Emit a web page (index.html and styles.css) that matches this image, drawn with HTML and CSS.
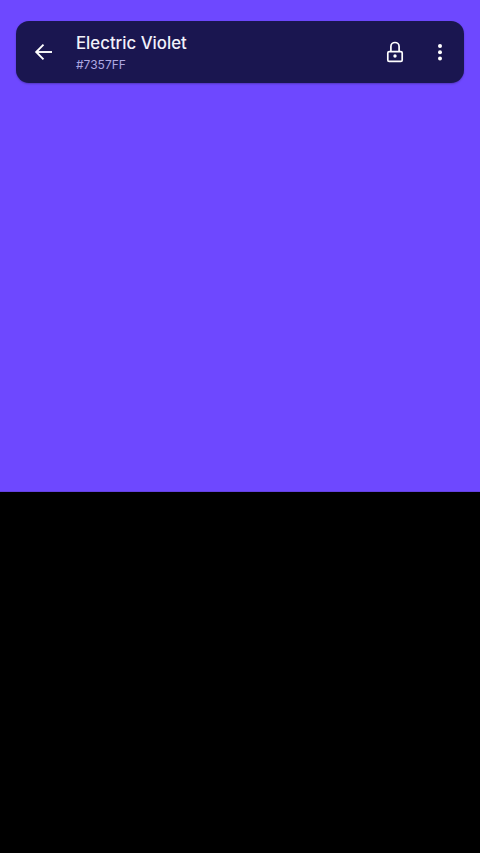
FILE: index.html
```html
<!DOCTYPE html>
<html lang="en">
<head>
    <meta charset="UTF-8">
    <meta name="viewport" content="width=device-width, initial-scale=1.0">
    <title>Electric Violet</title>
    <link rel="stylesheet" href="styles.css">
</head>
<body>
    <div class="swatch">
        <div class="toolbar">
            <svg class="back" viewBox="0 0 24 24" width="24" height="24" fill="none" stroke="#fff" stroke-width="1.9">
                <path d="M20 12H4.5"/>
                <path d="M11.5 4.7L4.2 12l7.3 7.3"/>
            </svg>
            <div class="titles">
                <div class="name">Electric Violet</div>
                <div class="hex">#7357FF</div>
            </div>
            <svg class="lock" viewBox="0 0 24 24" width="24" height="24" fill="none" stroke="#fff" stroke-width="1.7">
                <rect x="4.8" y="11.6" width="14.4" height="9.8" rx="1.4"/>
                <path d="M7.9 11.6V6.6a4.1 4.1 0 0 1 8.2 0v5"/>
                <circle cx="12" cy="16" r="1.7" fill="#fff" stroke="none"/>
            </svg>
            <svg class="more" viewBox="0 0 24 24" width="24" height="24" fill="#fff">
                <circle cx="12" cy="6" r="2"/>
                <circle cx="12" cy="12.3" r="2"/>
                <circle cx="12" cy="18.6" r="2"/>
            </svg>
        </div>
    </div>
</body>
</html>
```

FILE: styles.css
```css
html, body {
    height: 100%;
}
body {
    margin: 0;
    background-color: #000;
    font-family: Inter, "Noto Sans", sans-serif;
    overflow: hidden;
}
.swatch {
    height: 492px;
    padding: 21px 16px 0;
    box-sizing: border-box;
    background-color: #6e48ff;
    border-bottom: 1px solid #6341e0;
}
.toolbar {
    display: flex;
    align-items: center;
    height: 62px;
    padding: 0 12px 0 16px;
    border-radius: 13px;
    background-color: #1a1650;
    box-shadow: 0 1px 2px rgba(0, 0, 0, 0.25);
}
.back {
    flex: none;
}
.titles {
    flex: 1;
    margin-left: 20px;
    margin-top: 1px;
}
.name {
    font-size: 16.8px;
    font-weight: 500;
    line-height: 22px;
    color: #f2f1fa;
}
.hex {
    font-size: 12px;
    line-height: 17px;
    margin-top: 2px;
    color: #aea8e2;
}
.lock {
    flex: none;
    margin-right: 21px;
}
.more {
    flex: none;
}
```
